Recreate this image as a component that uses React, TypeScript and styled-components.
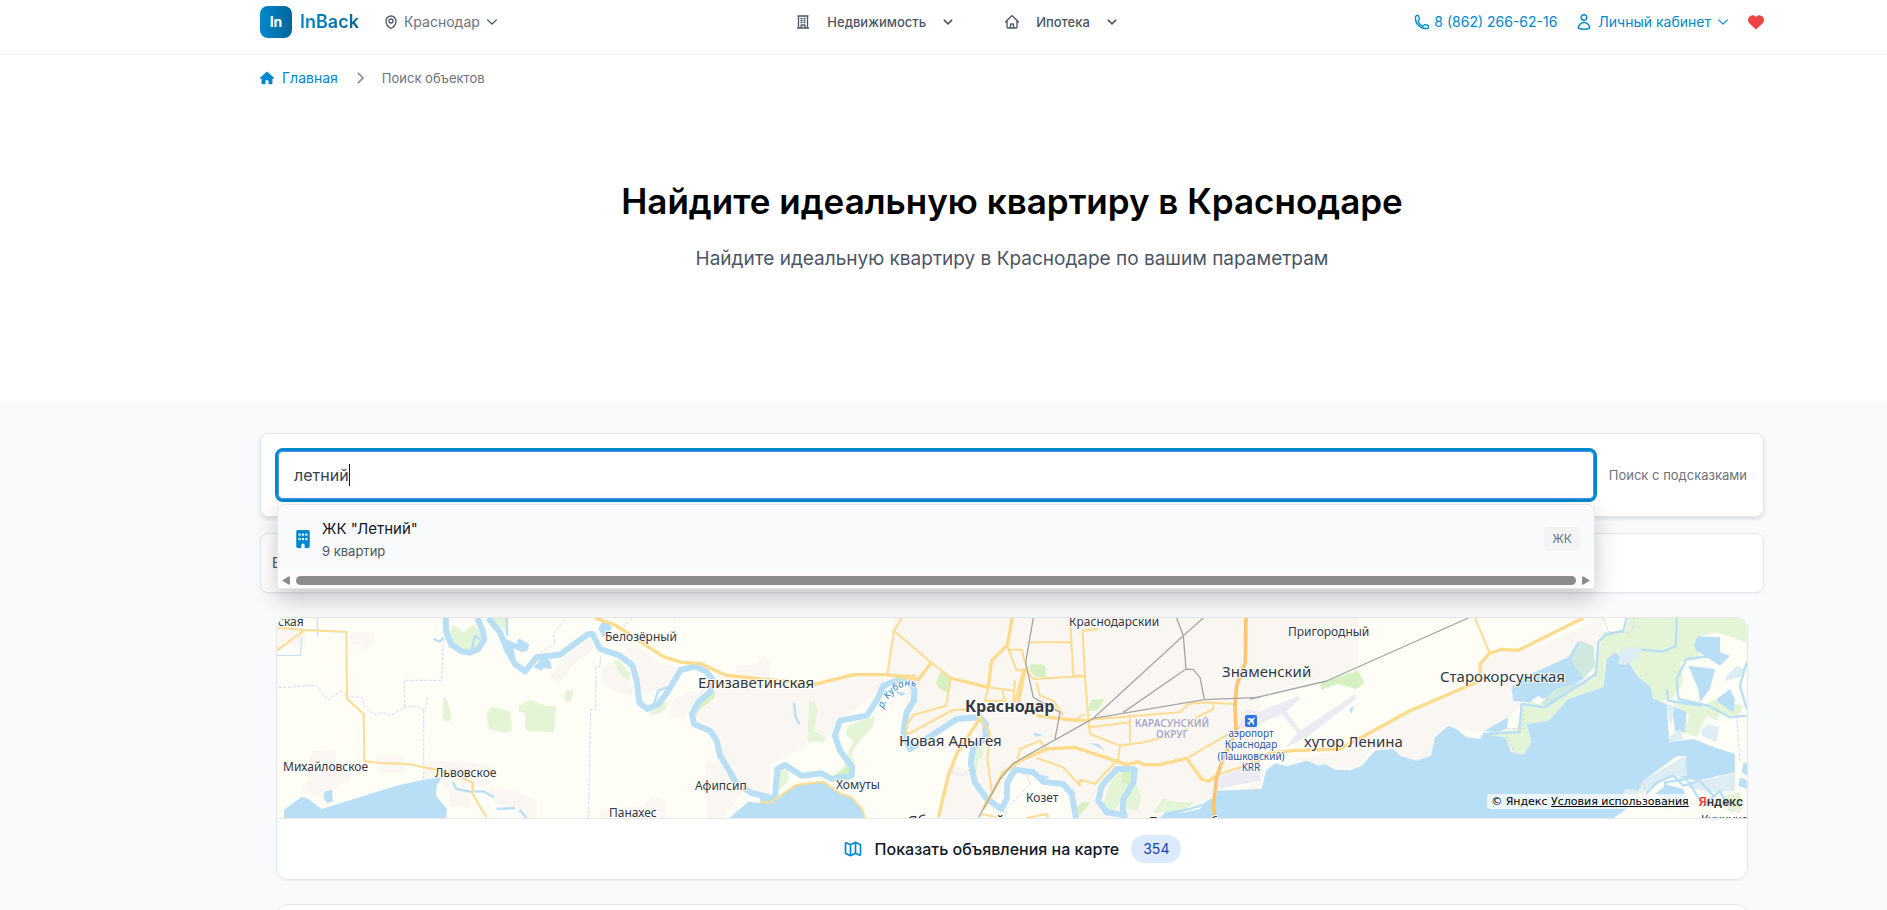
import React, { useState } from "react";
import styled, { createGlobalStyle } from "styled-components";
import {
  HiOutlineBuildingOffice,
  HiOutlineChevronDown,
  HiOutlineHome,
  HiOutlineMapPin,
  HiOutlinePhone,
  HiOutlineUser,
} from "react-icons/hi2";
import { HiOutlineMap } from "react-icons/hi";
import { FaBuilding, FaChevronRight, FaHeart, FaHouse } from "react-icons/fa6";

const GlobalStyle = createGlobalStyle`
  *, *::before, *::after { box-sizing: border-box; }
  html { scrollbar-width: none; }
  body {
    margin: 0;
    background: #f8fafc;
    color: #111827;
    font-family: Inter, "Noto Sans", sans-serif;
    font-size: 14px;
    line-height: 20px;
  }
  button, input { font: inherit; }
  a { color: inherit; text-decoration: none; }
`;

const Page = styled.div`
  min-height: 100vh;
`;

const Container = styled.div`
  max-width: 1673px;
  margin: 0 auto;
  padding: 0 16px 0 153px;
`;

const Bar = styled.header`
  background: #fff;
  border-bottom: 1px solid #f3f4f6;
`;

const BarRow = styled(Container)`
  display: flex;
  align-items: center;
  justify-content: space-between;
  padding-top: 6px;
  padding-bottom: 16px;
`;

const Group = styled.div<{ $gap: number }>`
  display: flex;
  align-items: center;
  gap: ${(p) => p.$gap}px;
`;

const Logo = styled.a`
  display: flex;
  align-items: center;
  gap: 8px;
`;

const LogoMark = styled.span`
  display: grid;
  place-items: center;
  width: 32px;
  height: 32px;
  border-radius: 8px;
  background: linear-gradient(90deg, #0088cc, #006699);
  color: #fff;
  font-size: 14px;
  font-weight: 700;
`;

const LogoText = styled.span`
  background: linear-gradient(90deg, #0088cc, #006699);
  background-clip: text;
  color: transparent;
  font-size: 18px;
  font-weight: 600;
`;

const MenuButton = styled.button<{ $gap: number; $tone: string; $strong?: boolean }>`
  display: flex;
  align-items: center;
  gap: ${(p) => p.$gap}px;
  padding: 0;
  border: 0;
  background: none;
  color: ${(p) => p.$tone};
  font-size: ${(p) => (p.$strong ? 13 : 14)}px;
  font-weight: ${(p) => (p.$strong ? 500 : 400)};
  cursor: pointer;
`;

const Nav = styled.nav`
  display: flex;
  gap: 50px;
`;

const PhoneLink = styled.a`
  display: flex;
  align-items: center;
  gap: 4px;
  color: #0088cc;
`;

const FavLink = styled.a`
  display: flex;
  color: #ef4444;
`;

const Hero = styled.section`
  background: #fff;
`;

const Crumbs = styled.nav`
  display: flex;
  align-items: center;
  padding: 13px 0;
  gap: 16px;
  color: #6b7280;
  font-size: 13px;

  svg { color: #9ca3af; }
`;

const HomeLink = styled.a`
  display: flex;
  align-items: center;
  gap: 8px;
  color: #0088cc;
  font-size: 14px;

  svg { color: #0088cc; }
`;

const Intro = styled.div`
  padding: 80px 0 126px;
  text-align: center;
`;

const Title = styled.h1`
  margin: 0 0 22px;
  color: #000;
  font-size: 35px;
  font-weight: 600;
  line-height: 40px;
`;

const Lead = styled.p`
  margin: 0;
  color: #4b5563;
  font-size: 19px;
  line-height: 32px;
`;

const Results = styled(Container)`
  padding-top: 32px;
`;

const Card = styled.section`
  border: 1px solid #e5e7eb;
  border-radius: 8px;
  background: #fff;
`;

const SearchCard = styled(Card)`
  display: flex;
  align-items: center;
  gap: 12px;
  padding: 14px 16px 14px 14px;
  box-shadow: 0 2px 4px rgba(0, 0, 0, 0.12);
`;

const SearchBox = styled.div`
  position: relative;
  flex: 1;
`;

const SearchInput = styled.input`
  display: block;
  width: 100%;
  height: 54px;
  padding: 0 16px;
  border: 3px solid #0088cc;
  border-radius: 8px;
  outline: 0;
  background: #fff;
  color: #374151;
  caret-color: transparent;
  font-size: 16px;
  box-shadow: inset 0 0 0 1px #4a90f5;
`;

const Caret = styled.span`
  position: absolute;
  top: 16px;
  left: 74px;
  width: 1px;
  height: 22px;
  background: #111827;
`;

const Hint = styled.span`
  color: #6b7280;
  font-size: 13px;
`;

const Suggestions = styled.div`
  position: absolute;
  z-index: 2;
  top: 56px;
  left: 2px;
  right: 2px;
  border: 1px solid #e5e7eb;
  border-radius: 8px 8px 0 0;
  background: #fcfcfc;
  box-shadow: 0 10px 24px rgba(0, 0, 0, 0.22);
`;

const Suggestion = styled.button`
  display: flex;
  align-items: center;
  gap: 10px;
  width: 100%;
  padding: 12px 14px 12px 16px;
  border: 0;
  border-radius: 8px 8px 0 0;
  background: #f8fafc;
  text-align: left;
  cursor: pointer;

  svg { color: #0088cc; }
`;

const SuggestionText = styled.span`
  display: flex;
  flex: 1;
  flex-direction: column;
  color: #111827;
  font-size: 15px;
  line-height: 24px;
`;

const SuggestionNote = styled.span`
  color: #4b5563;
  font-size: 13px;
  line-height: 20px;
`;

const Tag = styled.span`
  padding: 4px 8px;
  border-radius: 4px;
  background: #f3f4f6;
  color: #6b7280;
  font-size: 12px;
  line-height: 16px;
`;

const ScrollTrack = styled.div`
  display: flex;
  align-items: center;
  gap: 6px;
  padding: 3px 4px;
`;

const ScrollThumb = styled.div`
  flex: 1;
  height: 9px;
  border-radius: 5px;
  background: #8b8b8b;
`;

const ScrollArrow = styled.svg`
  width: 8px;
  height: 9px;
  fill: #8b8b8b;
`;

const FilterCard = styled(Card)`
  margin-top: 16px;
  padding: 19px 11px;
  color: #4b5563;
  box-shadow: 0 1px 2px rgba(0, 0, 0, 0.05);
`;

const Inset = styled.div`
  display: grid;
  gap: 24px;
  padding: 24px 16px 0;
`;

const MapCard = styled(Card)`
  overflow: hidden;
  border-radius: 12px;
  box-shadow: 0 1px 2px rgba(0, 0, 0, 0.05);
`;

const MapView = styled.div`
  position: relative;
  height: 201px;
  border-bottom: 1px solid #e5e7eb;
`;

const MapSvg = styled.svg`
  display: block;
  width: 100%;
  height: 200px;
  background: #fefef6;
`;

const MapCredits = styled.div`
  position: absolute;
  right: 4px;
  bottom: 9px;
  display: flex;
  align-items: center;
  gap: 6px;
  color: #000;
  font-family: "DejaVu Sans", sans-serif;
  font-size: 11px;
  line-height: 15px;

  a { text-decoration: underline; }
`;

const CreditText = styled.span`
  padding: 0 4px;
  border-radius: 3px;
  background: rgba(255, 255, 255, 0.7);
`;

const Brand = styled.span`
  color: #333;
  font-family: Roboto, sans-serif;
  font-size: 13px;
  font-weight: 500;

  &::first-letter { color: #f33; }
`;

const MapButton = styled.button`
  display: flex;
  align-items: center;
  justify-content: center;
  gap: 12px;
  width: 100%;
  height: 60px;
  border: 0;
  background: #fff;
  color: #111827;
  font-size: 16px;
  font-weight: 500;
  cursor: pointer;

  svg { color: #0088cc; }
`;

const Count = styled.span`
  padding: 4px 12px;
  border-radius: 14px;
  background: #dbeafe;
  color: #1e40af;
  font-size: 14px;
  font-weight: 400;
  line-height: 20px;
`;

const NextCard = styled(Card)`
  height: 80px;
  border-radius: 12px;
`;

type Shape = [sector: number, d: string];

const SECTOR = 1470;

const Layer = ({ shapes, ...rest }: { shapes: Shape[] } & React.SVGProps<SVGGElement>) => (
  <g {...rest}>
    {shapes.map(([sector, d], i) => (
      <path key={i} d={d} transform={`translate(${sector * SECTOR} 0)`} />
    ))}
  </g>
);

const urban: Shape[] = [
  [0, "M20 60L105 68L108 112L60 108L20 118ZM242 68H312V106L295 107V120L278 118L276 108H244ZM110 470L128 425L200 422L196 455L250 460L240 515L205 530L170 570L95 540L115 515ZM318 440H404V492H330L328 465L318 462ZM462 455L600 458L660 475V528L600 535V595L540 592L538 550L500 510L462 505ZM655 535L730 542L800 575V627H760L720 600L675 580Z"],
  [0, "M840 205L880 142L965 85L970 125L915 160L868 222ZM995 190L1012 160L1060 185L1090 240L1085 265L1040 250L1000 225ZM1068 120L1105 108L1165 160L1225 175L1190 232L1115 260L1095 185ZM1195 325L1210 270L1260 245L1300 255L1260 300L1240 330ZM1395 190L1400 170L1455 165L1480 145L1500 155V205L1400 200ZM1290 235L1330 200L1500 215V555L1440 545L1400 520L1350 430L1325 350L1280 330ZM1308 458L1345 460L1420 545L1360 627H1310ZM990 600L1120 590L1150 562L1185 570V627H990Z"],
  [1, "M0 210L160 225L280 195L390 200L340 260L250 330L215 385L160 400L60 450L0 480ZM400 27L380 200L440 205L430 370L500 390L560 335L640 320L655 400L640 500L700 590L760 480L860 500L930 520L960 627H1180L1300 600L1370 545L1500 510V27ZM640 480L565 465L530 627H670Z"],
  [2, "M0 27H325V180L210 210L0 265ZM205 122H300V180L215 240ZM740 130L860 115L1060 27V80L1035 180L830 270L720 380L600 350L550 385L540 450L490 455L370 415L320 475L240 480L130 450L270 425L480 300L680 225L690 165ZM0 480L40 470L36 530L0 545Z"],
];

const greens: Shape[] = [
  [0, "M535 70L550 48L580 68L610 48L628 62L635 90L610 122L595 128L555 112L540 95ZM665 27H710V65L690 55ZM520 265L530 270L546 325L534 339L519 330ZM650 315L665 293L721 308L726 362L708 372L656 359ZM747 290L778 273L827 290L858 291L852 369L774 367L765 357L766 311L747 308ZM886 244L912 246L900 280L885 278ZM1030 155L1050 155L1080 195L1078 216L1055 200ZM1145 290L1190 275L1188 300L1165 315L1140 318Z"],
  [1, "M145 345L147 280L165 277L172 300L162 365L197 385L193 400L142 395ZM255 375L270 348L345 320L340 350L300 395L275 430L285 470L260 515L220 500L250 475L265 430L280 395ZM640 390L665 400L670 440L655 455L645 520L635 475ZM1055 510L1090 478H1115L1125 520L1145 560L1135 605L1095 600L1090 565L1060 610L1025 600ZM1180 610L1210 567L1240 578L1300 580L1280 605L1190 612ZM55 490L85 478L85 515L55 545ZM945 595L990 580L970 600L960 625H950Z"],
  [2, "M1060 70L1125 65L1135 27H1490V100L1400 70L1340 85L1350 150L1290 160L1300 220L1265 270L1220 280L1120 135L1100 165L1065 155L1060 235L955 270L890 340L830 345L845 400L820 437L790 432L765 390L700 397L695 375L800 360L825 270L880 290L1030 195L1050 110ZM1250 270L1300 285H1370L1395 270L1480 290L1465 325L1410 310L1400 335L1370 320L1340 385L1300 370L1320 320ZM1165 520L1190 540L1165 570ZM1420 560L1470 550L1475 600L1440 610Z"],
];

const brightGreens: Shape[] = [
  [0, "M1275 330L1280 295L1337 245L1333 268L1290 300Z"],
  [1, "M527 222L545 180L575 208L565 252L540 240ZM805 178L815 165L855 167L860 205L825 203ZM985 295L995 272L1035 270L1010 305H985ZM220 500L280 460L270 515L230 515ZM1085 520L1090 480L1115 480L1115 500L1105 525ZM945 600L965 580L992 578L975 603L960 615Z"],
  [2, "M213 222L325 184L343 222L320 240L265 225L213 242Z"],
];

const airfields: Shape[] = [
  [1, "M1430 360L1460 300L1500 310V350ZM1365 510L1500 455V515L1370 540Z"],
  [2, "M0 318L145 262L148 270L110 308L150 365L315 255L318 270L170 385L105 418L142 372L95 315L40 340L0 370Z"],
];

const water: Shape[] = [
  [0, "M42 627V602L95 563L115 570L155 600L380 530L460 512L515 505L500 530L498 560L531 600L528 627ZM162 548L186 542L188 578L173 582L162 572ZM985 60L995 40L1020 42L1025 60L1000 85ZM700 85L740 105L745 88L778 105L772 125L755 130L730 118L740 165L720 140ZM790 175L820 145L840 155L846 180L820 177L815 185ZM1378 627L1435 578L1500 585V627Z"],
  [1, "M0 582L50 572L110 528L190 518L240 553L275 565L305 598L315 627H0ZM400 245L440 252L425 262ZM822 372L850 378L825 384ZM1370 545L1500 540V627H1200L1215 612L1280 610L1320 600L1340 575L1370 560ZM985 402L1015 405L1035 425L1010 412Z"],
  [2, "M0 545L35 540L48 485L75 463L110 472L170 455L205 470L225 465L255 482L300 484L335 470L375 425L430 420L450 440L500 455L543 440L555 385L595 350L620 360L650 385L690 390L700 375L765 385L785 430L820 437L845 400L830 345L895 335L955 270L1060 235L1070 150L1095 130L1120 150L1140 165L1165 205L1200 230L1210 270L1250 285L1258 400L1330 390L1380 410L1455 435V490L1340 515L1290 505L1310 440L1280 442L1180 515L1165 545L1125 540L1130 600L1090 627H0Z"],
  [2, "M785 240L790 228L830 200L955 145L985 95L1000 140L1000 210L960 235L880 270L865 260L840 280L790 275ZM705 365L775 325L770 360L740 370ZM1342 82L1410 85L1410 130L1440 140L1410 170L1340 125L1332 110ZM1315 170L1395 180L1380 240L1350 280L1345 240ZM1400 270L1440 240L1455 270L1450 310L1405 280ZM1265 288L1310 310L1305 370L1275 365ZM1480 462H1492V500L1475 490ZM1470 505L1490 512V540L1465 530ZM1215 555L1250 527L1300 540L1320 600L1270 590ZM298 300L312 290L305 315Z"],
];

const pale: Shape[] = [
  [2, "M965 150L990 95L1030 110L1035 170L1000 210L970 165ZM870 285L920 238L980 225L1020 215L890 292Z"],
];

const marsh: Shape[] = [
  [2, "M1105 165L1110 125L1140 110L1175 120L1160 150L1125 168ZM1170 545L1180 515L1305 440L1312 500L1250 505L1200 545ZM1430 200L1460 172L1488 180L1470 205L1425 215ZM1248 285L1275 290L1262 350ZM1352 365L1375 345L1408 355L1400 400L1355 380ZM1330 520L1455 492V545L1380 550L1310 535ZM1100 600L1125 542L1170 545L1160 580ZM1255 385L1290 360L1300 390L1260 402Z"],
];

const rivers: Shape[] = [
  [0, "M527 27L529 70L545 108L575 127L598 131L625 120L643 92L638 65L622 27"],
  [0, "M655 27L690 70L710 120L735 165L765 187L800 145L870 137L900 115L955 75L968 75L990 120L1050 140L1088 170L1100 215L1108 280L1132 300L1165 285L1192 250L1232 183L1275 172L1310 188L1330 215L1320 250L1285 280L1266 315L1272 345L1320 365L1340 395L1350 440L1375 480L1400 525L1445 552L1500 565"],
  [1, "M0 572L45 565L52 480L75 468L125 500L185 493L215 510L275 500L277 475L240 425L225 380L240 335L320 320L350 275L370 230L410 215L440 210L463 240L462 275L440 310L430 370L450 420L530 370L590 330L660 325L678 345L677 385L640 415L632 460L645 520L680 570L725 600L740 570L742 520L765 482L820 490L850 518L910 525L935 555L948 627"],
  [1, "M1125 475L1120 520L1090 570L1088 600L1095 627M1125 480L1070 480L1025 530L1015 575L1040 610L1100 620"],
];

const streams: Shape[] = [
  [0, "M490 90L510 97L522 85M548 520L560 540L600 548L640 547L672 565M680 600L735 597M748 602L770 627M710 27L712 80M1150 290L1165 245L1205 230M605 120L615 80L630 90"],
  [1, "M102 280L106 320L118 346M835 500L865 505M1215 615L1290 600L1350 580"],
  [2, "M1130 27L1120 65L1065 78L1045 100L1038 195L960 245L885 295L815 285L808 370L700 375M1175 122L1240 128L1278 110L1280 27M1395 140L1310 150L1280 210L1285 270L1375 290L1440 325L1490 320M1250 240L1255 275L1320 285L1355 290M1250 600L1245 520L1310 510L1360 590L1410 545L1430 590M1175 570L1220 520L1270 500L1300 530L1350 515L1390 560M1490 160L1470 230L1490 300"],
];

const boundaries: Shape[] = [
  [0, "M25 236L137 229L175 272L213 247L235 264L274 264L285 295L313 317L340 310L362 319L405 295L440 291L465 305L473 266M461 305V510M403 294V214H515L520 95M992 140L990 172L978 175L977 302H962L955 627M800 138L855 105L850 75L888 27M1060 55L1085 27M1210 27L1218 35"],
  [1, "M665 330L670 380M640 470L610 500L575 490M735 627L740 600L810 525L800 495M915 520L945 545L935 575"],
  [2, "M1060 27L1075 68L1140 72L1155 45L1150 27M820 300V360L775 358L770 385L795 430M1460 320L1470 460M1180 520L1190 550L1175 590M1470 570V610L1430 600"],
];

const canals: Shape[] = [[0, "M142 27V80M94 85L92 139H21"]];

const roads: Shape[] = [
  [0, "M21 56L105 63L229 69L231 269L281 315L283 456L330 462L415 465L535 490L608 520V556L650 627M105 63L21 124"],
  [1, "M425 27L402 65L382 195M402 65L512 160L573 207L558 290L460 318L440 350V380M512 160L475 212M573 207L685 235L760 245M755 27L742 115L750 122L785 122L800 180L770 185L745 120M742 108L695 155L685 235L675 275H735L727 245M790 180L765 280M820 210L795 180M440 378L580 302H620M810 100H930M930 27L940 200H975M820 210L975 202L985 330L990 375L1080 410L1075 450L1005 525L960 512V530L910 475L830 447M1015 60L968 65L975 202M830 220L840 260L880 275L910 320M765 215L760 280M830 320L890 328L985 332L1260 310L1285 285L1330 280L1420 285M985 335L940 335L975 315M990 355L1110 340V400M1110 315V340M1080 410L1150 400L1270 370L1310 325L1360 300V285M1280 448L1440 355M1380 495L1500 455M655 320L690 370L682 450L695 545M773 450L780 420L840 395L860 420M665 615L720 627M800 627L860 615L865 627M0 578L30 582L110 527L190 518L240 553L275 565L305 598L315 627M160 225L280 196L470 200"],
  [2, "M675 27L718 130"],
];

const highways: Shape[] = [
  [0, "M975 27L1035 48L1180 143L1235 160L1290 163L1365 198L1470 210L1640 225L1750 197L1850 197L1945 212L1985 160"],
  [1, "M570 207L685 235M685 235L695 155L742 108L757 27M775 280L795 180M665 320L590 435L565 500L535 627M670 600L730 490L780 455L860 420L945 415L1100 467L1135 458L1150 467H1200L1280 448L1325 510L1345 517L1370 500M830 320L950 335"],
  [2, "M1000 27L805 124L755 121L718 133L690 165L690 215L480 305L270 420L130 425L60 432L0 455"],
];

const trunks: Shape[] = [[1, "M1458 27L1456 160L1430 230L1425 290L1428 365L1385 460L1370 505L1360 590L1365 627"]];

const rails: Shape[] = [
  [1, "M820 27L797 160L820 265L900 310L885 390M1330 27L1270 80L1000 328L760 463L720 510L655 627M1250 27L1270 80L1278 180L1090 310M1278 180L1300 182L1320 205L1333 270M1000 328L1333 272L1500 265"],
  [2, "M655 27L230 216L0 270"],
];

const Label = styled.text<{ $size: number }>`
  fill: #333740;
  stroke: rgba(255, 255, 255, 0.8);
  stroke-width: 2px;
  paint-order: stroke;
  font-family: "Noto Sans", sans-serif;
  font-size: ${(p) => p.$size}px;
`;

const CityLabel = styled(Label)`
  font-weight: 700;
`;

const DistrictLabel = styled(Label)`
  fill: #aaa6c5;
  font-weight: 600;
  text-anchor: middle;
`;

const AirportLabel = styled(Label)`
  fill: #2d55a5;
  text-anchor: middle;
`;

const RiverLabel = styled(Label)`
  fill: #3c7fc4;
  font-style: italic;
`;

const places: [string, number, number, number][] = [
  ["ская", 1, 8, 12],
  ["Белозёрный", 328, 23, 12],
  ["Елизаветинская", 421, 70, 15],
  ["Михайловское", 6, 153, 12],
  ["Львовское", 158, 159, 12],
  ["Афипсип", 418, 172, 12],
  ["Панахес", 332, 199, 12],
  ["Новая Адыгея", 622, 128, 15],
  ["Хомуты", 559, 171, 12],
  ["Козет", 749, 184, 12],
  ["Краснодарский", 792, 8, 12],
  ["Знаменский", 945, 59, 15],
  ["Яблоновский", 631, 208, 15],
  ["Тлюстенхабль", 873, 208, 12],
  ["Пригородный", 1011, 18, 12],
  ["Старокорсунская", 1163, 64, 15],
  ["хутор Ленина", 1027, 129, 15],
  ["Кунчуко", 1424, 206, 12],
];

const CityMap = () => (
  <MapSvg viewBox="0 0 1470 200" preserveAspectRatio="xMidYMid slice" role="img" aria-label="Карта Краснодара">
    <g transform="translate(-7 -9) scale(0.33333)" fill="none" strokeLinejoin="round">
      <Layer shapes={urban} fill="#faf7f2" />
      <Layer shapes={greens} fill="#e4f4d7" />
      <Layer shapes={brightGreens} fill="#d5f1c1" />
      <Layer shapes={airfields} fill="#ecebf4" />
      <Layer shapes={water} fill="#b8dff6" />
      <Layer shapes={pale} fill="#cfe9e1" />
      <Layer shapes={marsh} fill="#deedf3" />
      <Layer shapes={rivers} stroke="#b8dff6" strokeWidth="18" />
      <Layer shapes={streams} stroke="#b8dff6" strokeWidth="7" />
      <Layer shapes={canals} stroke="#b8dff6" strokeWidth="3" />
      <Layer shapes={boundaries} stroke="#d9d2f0" strokeWidth="3" strokeDasharray="9 5" />
      <Layer shapes={roads} stroke="#fddc91" strokeWidth="6" />
      <Layer shapes={highways} stroke="#fddb8d" strokeWidth="10" />
      <Layer shapes={trunks} stroke="#fdc573" strokeWidth="11" />
      <Layer shapes={rails} stroke="#a6a6a6" strokeWidth="4" />
    </g>
    <path id="river-line" d="M606 91Q617 67 633 68T645 76" fill="none" />
    <RiverLabel $size={10}>
      <textPath href="#river-line">р. Кубань</textPath>
    </RiverLabel>
    {places.map(([name, x, y, size]) => (
      <Label key={name} x={x} y={y} $size={size}>{name}</Label>
    ))}
    <CityLabel x={688} y={94} $size={16}>Краснодар</CityLabel>
    <DistrictLabel x={895} y={109} $size={10}>КАРАСУНСКИЙ</DistrictLabel>
    <DistrictLabel x={895} y={120} $size={10}>ОКРУГ</DistrictLabel>
    <rect x="968" y="97" width="12" height="12" rx="2" fill="#2f72e0" />
    <path d="M977.500 99.200L975.300 101L971 100L970.300 100.800L973.500 102.800L971.800 104.600L970.300 104.400L969.800 105L971.400 105.900L972.300 107.500L973 107L972.700 105.500L974.500 103.800L976.400 107L977.200 106.300L976.300 102L978.200 99.900Z" fill="#fff" />
    {["аэропорт", "Краснодар", "(Пашковский)", "KRR"].map((line, i) => (
      <AirportLabel key={line} x={974} y={[119, 130, 142, 153][i]} $size={10}>{line}</AirportLabel>
    ))}
  </MapSvg>
);

export default function App() {
  const [query, setQuery] = useState("летний");

  return (
    <Page>
      <GlobalStyle />
      <Bar>
        <BarRow>
          <Group $gap={24}>
            <Logo href="#">
              <LogoMark>In</LogoMark>
              <LogoText>InBack</LogoText>
            </Logo>
            <MenuButton $gap={5} $tone="#6b7280">
              <HiOutlineMapPin size={16} strokeWidth={2} color="#4b5563" />
              Краснодар
              <HiOutlineChevronDown size={14} strokeWidth={2} color="#374151" />
            </MenuButton>
          </Group>
          <Nav>
            <MenuButton $gap={16} $tone="#4b5563" $strong>
              <HiOutlineBuildingOffice size={16} strokeWidth={2} />
              Недвижимость
              <HiOutlineChevronDown size={12} strokeWidth={3} />
            </MenuButton>
            <MenuButton $gap={16} $tone="#4b5563" $strong>
              <HiOutlineHome size={16} strokeWidth={2} />
              Ипотека
              <HiOutlineChevronDown size={12} strokeWidth={3} />
            </MenuButton>
          </Nav>
          <Group $gap={18}>
            <PhoneLink href="tel:88622666216">
              <HiOutlinePhone size={16} strokeWidth={2} />
              8 (862) 266-62-16
            </PhoneLink>
            <MenuButton $gap={5} $tone="#0088cc">
              <HiOutlineUser size={18} strokeWidth={2} />
              Личный кабинет
              <HiOutlineChevronDown size={14} strokeWidth={2} />
            </MenuButton>
            <FavLink href="#" aria-label="Избранное">
              <FaHeart size={16} />
            </FavLink>
          </Group>
        </BarRow>
      </Bar>

      <Hero>
        <Container>
          <Crumbs>
            <HomeLink href="#">
              <FaHouse size={14} />
              Главная
            </HomeLink>
            <FaChevronRight size={12} stroke="currentColor" strokeWidth={40} />
            <span>Поиск объектов</span>
          </Crumbs>
          <Intro>
            <Title>Найдите идеальную квартиру в Краснодаре</Title>
            <Lead>Найдите идеальную квартиру в Краснодаре по вашим параметрам</Lead>
          </Intro>
        </Container>
      </Hero>

      <Results>
        <SearchCard>
          <SearchBox>
            <SearchInput
              type="text"
              aria-label="Поиск"
              value={query}
              onChange={(e) => setQuery(e.target.value)}
            />
            <Caret />
            <Suggestions>
              <Suggestion>
                <FaBuilding size={18} />
                <SuggestionText>
                  ЖК "Летний"
                  <SuggestionNote>9 квартир</SuggestionNote>
                </SuggestionText>
                <Tag>ЖК</Tag>
              </Suggestion>
              <ScrollTrack>
                <ScrollArrow viewBox="0 0 8 9"><path d="M0 4.500L6.500 0.500Q8 0 8 1.500V7.500Q8 9 6.500 8.500Z" /></ScrollArrow>
                <ScrollThumb />
                <ScrollArrow viewBox="0 0 8 9"><path d="M8 4.500L1.500 0.500Q0 0 0 1.500V7.500Q0 9 1.500 8.500Z" /></ScrollArrow>
              </ScrollTrack>
            </Suggestions>
          </SearchBox>
          <Hint>Поиск с подсказками</Hint>
        </SearchCard>
        <FilterCard>В</FilterCard>
        <Inset>
          <MapCard>
            <MapView>
              <CityMap />
              <MapCredits>
                <CreditText>© Яндекс <a href="#">Условия использования</a></CreditText>
                <Brand>Яндекс</Brand>
              </MapCredits>
            </MapView>
            <MapButton>
              <HiOutlineMap size={20} />
              Показать объявления на карте
              <Count>354</Count>
            </MapButton>
          </MapCard>
          <NextCard />
        </Inset>
      </Results>
    </Page>
  );
}
